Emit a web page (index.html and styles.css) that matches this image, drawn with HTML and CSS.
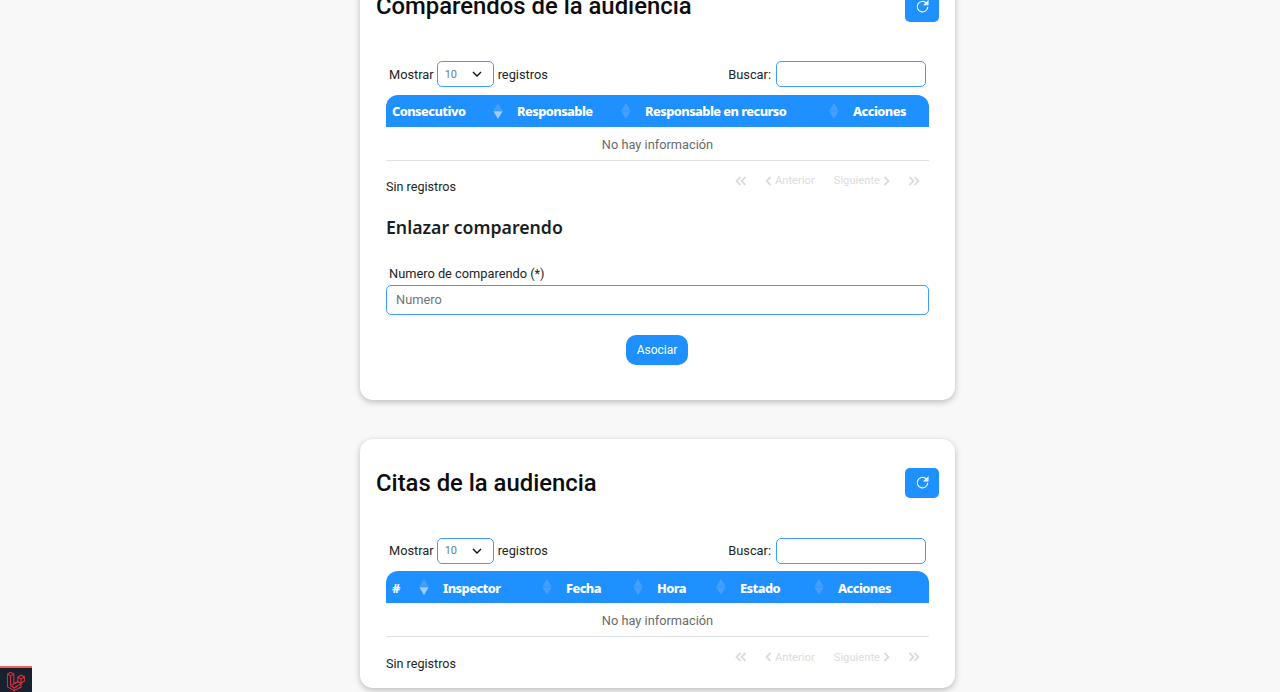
FILE: index.html
```html
<!DOCTYPE html>
<html lang="es">
<head>
    <meta charset="UTF-8">
    <meta name="viewport" content="width=device-width, initial-scale=1.0">
    <title>Audiencia</title>
    <link rel="stylesheet" href="styles.css">
</head>
<body>
    <svg class="sprites" width="0" height="0">
        <symbol id="sort" viewBox="0 0 10 17">
            <path d="M5 0l5 8.2H0z"/>
            <path d="M5 17l5-8.2H0z"/>
        </symbol>
        <symbol id="sort-active" viewBox="0 0 10 17">
            <path d="M5 0l5 8.2H0z"/>
            <path class="sort-lit" d="M5 17l5-8.2H0z"/>
        </symbol>
        <symbol id="first" viewBox="0 0 12 10"><path d="M5.5 1L1.5 5l4 4M10.5 1l-4 4 4 4"/></symbol>
        <symbol id="last" viewBox="0 0 12 10"><path d="M1.5 1l4 4-4 4M6.5 1l4 4-4 4"/></symbol>
        <symbol id="prev" viewBox="0 0 7 10"><path d="M5.5 1l-4 4 4 4"/></symbol>
        <symbol id="next" viewBox="0 0 7 10"><path d="M1.5 1l4 4-4 4"/></symbol>
        <symbol id="refresh" viewBox="0 0 16 16">
            <path d="M13.6 8.4A5.6 5.6 0 1 1 11.6 3.8L13.4 5.4"/>
            <path class="fill" d="M13.8 2.4v3.8H10z"/>
        </symbol>
    </svg>

    <main class="page">
        <section class="card card-first">
            <div class="card-head">
                <h1>Comparendos de la audiencia</h1>
                <button class="btn-refresh"><svg><use href="#refresh"/></svg></button>
            </div>
            <div class="dt-top">
                <label class="dt-length">Mostrar
                    <select><option>10</option><option>25</option></select>
                    registros</label>
                <label class="dt-search">Buscar: <input type="text"></label>
            </div>
            <table class="dt">
                <thead>
                    <tr>
                        <th class="w-consecutivo">Consecutivo<svg class="sort"><use href="#sort-active"/></svg></th>
                        <th class="w-responsable">Responsable<svg class="sort"><use href="#sort"/></svg></th>
                        <th class="w-recurso">Responsable en recurso<svg class="sort"><use href="#sort"/></svg></th>
                        <th class="w-acciones-a">Acciones</th>
                    </tr>
                </thead>
                <tbody>
                    <tr><td colspan="4">No hay información</td></tr>
                </tbody>
            </table>
            <div class="dt-bottom">
                <span class="dt-info">Sin registros</span>
                <nav class="pager">
                    <a class="pager-edge"><svg class="ico-double"><use href="#first"/></svg></a>
                    <a><svg class="ico-single"><use href="#prev"/></svg>Anterior</a>
                    <a>Siguiente<svg class="ico-single"><use href="#next"/></svg></a>
                    <a class="pager-edge"><svg class="ico-double"><use href="#last"/></svg></a>
                </nav>
            </div>
            <h2>Enlazar comparendo</h2>
            <form class="link-form">
                <label for="numero">Numero de comparendo (*)</label>
                <input type="text" id="numero" placeholder="Numero">
                <button type="button" class="btn-primary">Asociar</button>
            </form>
        </section>

        <section class="card">
            <div class="card-head">
                <h1>Citas de la audiencia</h1>
                <button class="btn-refresh"><svg><use href="#refresh"/></svg></button>
            </div>
            <div class="dt-top">
                <label class="dt-length">Mostrar
                    <select><option>10</option><option>25</option></select>
                    registros</label>
                <label class="dt-search">Buscar: <input type="text"></label>
            </div>
            <table class="dt">
                <thead>
                    <tr>
                        <th class="w-num">#<svg class="sort"><use href="#sort-active"/></svg></th>
                        <th class="w-inspector">Inspector<svg class="sort"><use href="#sort"/></svg></th>
                        <th class="w-fecha">Fecha<svg class="sort"><use href="#sort"/></svg></th>
                        <th class="w-hora">Hora<svg class="sort"><use href="#sort"/></svg></th>
                        <th class="w-estado">Estado<svg class="sort"><use href="#sort"/></svg></th>
                        <th class="w-acciones-b">Acciones</th>
                    </tr>
                </thead>
                <tbody>
                    <tr><td colspan="6">No hay información</td></tr>
                </tbody>
            </table>
            <div class="dt-bottom">
                <span class="dt-info">Sin registros</span>
                <nav class="pager">
                    <a class="pager-edge"><svg class="ico-double"><use href="#first"/></svg></a>
                    <a><svg class="ico-single"><use href="#prev"/></svg>Anterior</a>
                    <a>Siguiente<svg class="ico-single"><use href="#next"/></svg></a>
                    <a class="pager-edge"><svg class="ico-double"><use href="#last"/></svg></a>
                </nav>
            </div>
        </section>
    </main>

    <div class="debugbar">
        <svg viewBox="0 0 50 53" width="18" height="19">
            <path d="M1 6L10 1l9 5v27l11-6V14l9-5 10 5v11l-10 6v11L20 52 1 41z"/>
            <path d="M1 6l9 5 9-5M10 11v27l10 6 19-11M20 44v8M10 38l20-11M30 14l9 6 10-6M39 20v11M30 27l9 4"/>
        </svg>
    </div>
</body>
</html>
```

FILE: styles.css
```css
html, body {
    height: 100%;
}

body {
    margin: 0;
    overflow: hidden;
    background: #f8f8f8;
    font-family: Roboto, "Liberation Sans", sans-serif;
    font-size: 12.8px;
    color: #212529;
}

.sprites {
    position: absolute;
}

.page {
    width: 595px;
    margin: -38px 0 0 360px;
    display: flex;
    flex-direction: column;
    gap: 38.6px;
}

.card {
    background: #fff;
    border-radius: 13px;
    box-shadow: 0 2px 6px rgba(0, 0, 0, 0.25);
    padding: 29px 16px 0;
    height: 249px;
    box-sizing: border-box;
}

.card-first {
    height: 438px;
}

.card-head {
    display: flex;
    justify-content: space-between;
    align-items: flex-start;
    height: 30px;
    margin-bottom: 40.3px;
}

h1 {
    margin: 0;
    font-size: 23.85px;
    font-weight: 500;
    line-height: 30px;
    color: #0c0c0c;
}

.btn-refresh {
    width: 34px;
    height: 30.6px;
    padding: 0;
    border: none;
    border-radius: 5px;
    background: #1e90ff;
    display: flex;
    align-items: center;
    justify-content: center;
}

.btn-refresh svg {
    width: 15px;
    height: 15px;
    fill: none;
    stroke: #fff;
    stroke-width: 1.2;
}

.btn-refresh .fill {
    fill: #fff;
    stroke: none;
}

.dt-top {
    display: flex;
    justify-content: space-between;
    align-items: center;
    height: 26px;
    margin: 0 13px 7.4px 13px;
}

.dt-length, .dt-search {
    display: flex;
    align-items: center;
    gap: 4px;
}

.dt-search {
    gap: 5px;
}

.dt-length select {
    appearance: none;
    width: 57px;
    height: 26px;
    margin-left: -1px;
    padding: 0 0 0 7px;
    border: 1px solid #3f9dff;
    border-radius: 5px;
    font-family: inherit;
    font-size: 11px;
    color: #64809c;
    background: #fff url("data:image/svg+xml,%3Csvg xmlns='http://www.w3.org/2000/svg' viewBox='0 0 10 6'%3E%3Cpath d='M1 1l4 4 4-4' fill='none' stroke='%23111' stroke-width='1.4'/%3E%3C/svg%3E") no-repeat right 11px center / 10px 6px;
}

.dt-search input {
    width: 150px;
    height: 26px;
    box-sizing: border-box;
    padding: 0 8px;
    border: 1px solid #3f9dff;
    border-radius: 5px;
}

.dt {
    width: 543px;
    margin-left: 10px;
    border-collapse: separate;
    border-spacing: 0;
    table-layout: fixed;
}

.dt th {
    position: relative;
    height: 32px;
    padding: 1px 0 0 6px;
    background: #1e90ff;
    color: #fff;
    font-family: "Noto Sans", "Open Sans", sans-serif;
    font-size: 12.8px;
    font-weight: 800;
    letter-spacing: -0.55px;
    text-align: left;
    box-sizing: border-box;
}

.dt th:first-child {
    border-top-left-radius: 12px;
}

.dt th:last-child {
    border-top-right-radius: 12px;
}

.w-consecutivo { width: 125px; }
.w-responsable { width: 128px; }
.w-recurso { width: 208px; }
.w-acciones-a { width: 82px; }
.w-num { width: 51px; }
.w-inspector { width: 123px; }
.w-fecha { width: 91px; }
.w-hora { width: 83px; }
.w-estado { width: 98px; }
.w-acciones-b { width: 97px; }

.sort {
    position: absolute;
    right: 8px;
    top: 8px;
    width: 10px;
    height: 16px;
    fill: #449fff;
}

.sort-lit {
    fill: #9dcdff;
}

.dt td {
    height: 34px;
    padding: 2px 0 0;
    border-bottom: 1px solid #dee2e6;
    text-align: center;
    color: #6b6b6b;
    box-sizing: border-box;
    font-size: 12.8px;
}

.dt-bottom {
    display: flex;
    justify-content: space-between;
    align-items: flex-start;
    margin-left: 10px;
    width: 543px;
}

.dt-info {
    margin-top: 18.4px;
    font-size: 12.6px;
}

.pager {
    display: flex;
    align-items: center;
    margin-top: 13px;
    padding-right: 9px;
    font-size: 11.2px;
    color: #dcdcdc;
    fill: none;
    stroke: #dcdcdc;
    stroke-width: 1.8;
}

.pager a {
    display: flex;
    align-items: center;
    gap: 3px;
    margin-left: 18px;
    height: 14px;
}

.pager a:first-child {
    margin-left: 0;
}

.pager a:nth-child(3) {
    margin-left: 19px;
}

.ico-double {
    width: 12px;
    height: 10px;
}

.ico-single {
    width: 7px;
    height: 10px;
}

h2 {
    margin: 20.6px 0 0 10px;
    font-family: "Noto Sans", "Open Sans", sans-serif;
    font-size: 17.7px;
    font-weight: 600;
    line-height: 24px;
    color: #1a1f24;
}

.link-form {
    display: flex;
    flex-direction: column;
    margin: 27px 0 0 10px;
    width: 543px;
}

.link-form label {
    margin-left: 3px;
    line-height: 16px;
    margin-bottom: 3px;
}

.link-form input {
    height: 30px;
    box-sizing: border-box;
    padding: 0 9px;
    border: 1px solid #3f9dff;
    border-radius: 5px;
    font-family: inherit;
    font-size: 12.8px;
}

.link-form input::placeholder {
    color: #6c757d;
    opacity: 1;
}

.btn-primary {
    align-self: center;
    margin: 20px 1px 0 0;
    width: 62px;
    height: 30px;
    padding: 1px 0 0;
    border: none;
    border-radius: 10px;
    background: #1e90ff;
    color: #fff;
    font-family: inherit;
    font-size: 12px;
}

.debugbar {
    position: fixed;
    left: 0;
    bottom: 0;
    width: 32px;
    height: 26px;
    box-sizing: border-box;
    border-top: 2px solid #f4645f;
    padding-top: 3px;
    background: #18212e;
    display: flex;
    align-items: center;
    justify-content: center;
}

.debugbar svg {
    fill: none;
    stroke: #e0303a;
    stroke-width: 3;
}
```
